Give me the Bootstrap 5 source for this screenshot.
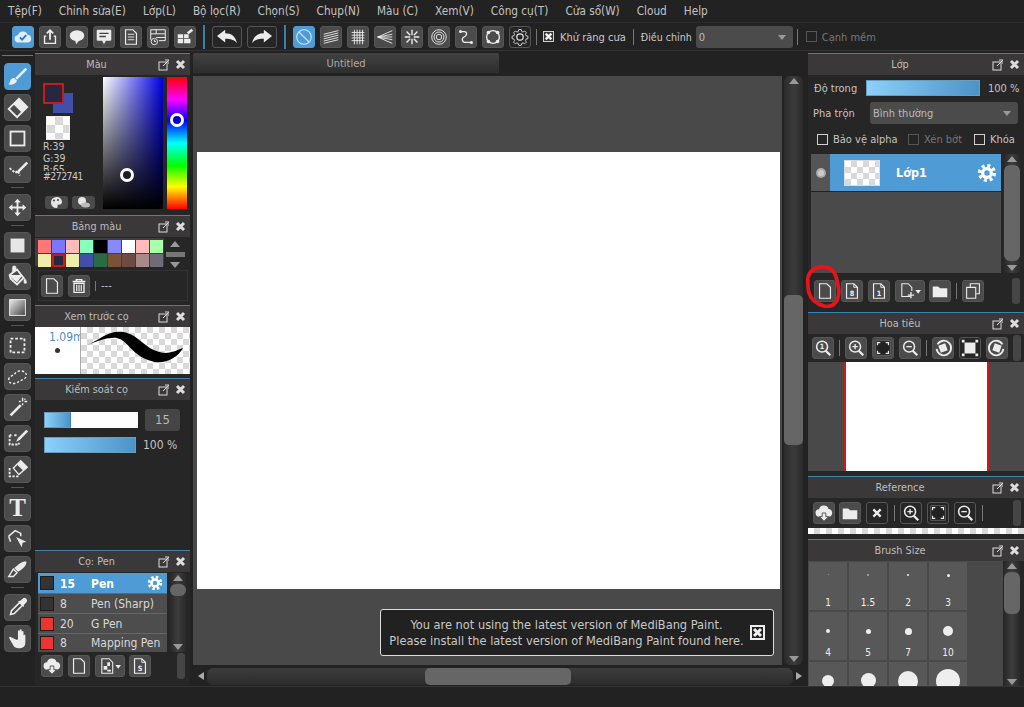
<!DOCTYPE html>
<html lang="vi">
<head>
<meta charset="utf-8">
<title>MediBang Paint</title>
<link href="https://cdn.jsdelivr.net/npm/bootstrap@5.3.0/dist/css/bootstrap.min.css" rel="stylesheet">
<style>
html,body{height:707px;overflow:hidden}
body{background:#222;color:#c4c4c4;font-family:"DejaVu Sans Condensed","DejaVu Sans",sans-serif;font-stretch:condensed;font-size:11px;line-height:1.2;width:1024px}
svg{display:block}
.nudge{padding-top:2px}
.app-menu{height:23px;padding-left:8px;gap:17px;font-size:11.7px;color:#c2c2c2;border-bottom:1px solid #2c2c2c;white-space:nowrap}
.app-bar{height:28px;padding-left:12px;border-bottom:1px solid #333;color:#c8c8c8;white-space:nowrap}
.ib{width:22px;height:22px;flex:none;padding:0;background:#4b4b4b;border:1px solid #565656;border-radius:3px;color:#ececec}
.ib.dk{background:#262626;border-color:#555}
.ib.on{background:#4f9bd6;border-color:#4f9bd6}
.ib.wide{width:30px}
.ib.tl{width:27px;height:27px;border-radius:4px}
.ib.tee{font-family:"Liberation Serif",serif;font-size:25px;line-height:1;font-weight:700}
.ib.tuck{margin-left:-1px}
.btn-row{gap:5px}
.vs{width:1px;height:16px;background:#777;flex:none}
.vs.bl{width:2px;height:24px;background:#3f7ea8;margin:0 7px}
.vs.short{height:10px}
.vs.m5{margin-left:5px}
.vs.m6{margin-left:7px}
.ck{width:11px;height:11px;border:1px solid #d0d0d0;flex:none;display:inline-block}
.ck.x{background:#333;color:#eee;margin-left:6px}
.ck.off{border-color:#555}
.ck-l{margin-left:6px}
.ck-l2{margin-left:5px}
.adj-l{margin-left:7px;font-size:10.6px}
.dim{color:#777}
.drop{background:#4b4b4b;border-radius:3px;color:#bbb;position:relative;height:22px;line-height:24px;padding-left:3px}
.drop::after{content:"";position:absolute;right:7px;top:50%;margin-top:-2px;border:4px solid transparent;border-top:5px solid #999;border-bottom:0}
.drop-a{width:97px;margin-left:4px}
.drop-b{width:148px}
.work{height:635px;padding-top:2px}
.col-tools{width:35px;flex:none;padding:10px 0 0 4px;gap:4px;position:relative}
.col-tools::before{content:"";position:absolute;left:2px;right:2px;top:2px;height:1px;background:#3f83ad}
.tsep{width:13px;height:3px;margin-left:7px;border-top:1px solid #555;flex:none;padding-top:1px}
.col-left{width:155px;flex:none}
.col-mid{width:613px;flex:none;margin-left:3px;position:relative}
.col-right{width:216px;flex:none;margin-left:2px}
.pn{border-top:1px solid #3f83ad;background:#262626;flex:none;overflow:hidden}
.pn-h{height:21px;background:#3a3838;color:#bdbdbd;font-size:10.8px}
.pn-t{flex-grow:1;text-align:center;padding-top:2px}
.pn-ic{width:32px;flex:none;gap:6px;color:#ddd}
.h-a{height:162px}.h-b{height:90px}.h-c{height:73px}.h-d{height:172px}.h-e{height:135px}
.h-f{height:259px}.h-g{height:164px}.h-i{height:63px}.h-j{height:147px}
.cl-swatches{width:68px;padding:8px 0 0 8px;position:relative;flex:none}
.sw-fg{width:21px;height:21px;background:#272741;border:2px solid #c81a1a;position:relative;z-index:1}
.sw-bg{width:20px;height:20px;background:#4050a8;margin:-11px 0 0 10px}
.chk{background:repeating-conic-gradient(#d9d9d9 0 25%,#fff 0 50%) 0 0/12px 12px}
.sw-tr{width:24px;height:24px;margin:3px 0 0 3px;border:1px solid #eee;background-size:16px 16px}
.cl-txt{font-size:10.5px;line-height:11.5px;margin-top:1px;color:#c8c8c8}
.cl-b{height:7px;overflow:hidden}
.cl-hex{letter-spacing:-.6px}
.cl-sq{width:60px;height:132px;margin:2px 0 0 0;background:linear-gradient(#0000 0,#000 100%),linear-gradient(90deg,#fff,#0000e8);position:relative;flex:none}
.cl-hue{width:20px;height:132px;margin:2px 0 0 4px;background:linear-gradient(#f00,#f0f 17%,#00f 33%,#0ff 50%,#0f0 67%,#ff0 83%,#f00);position:relative;flex:none}
.ring{position:absolute;width:14px;height:14px;border:3px solid #fff;border-radius:50%;transform:translate(-7px,-7px)}
.ring.hue{background:#0000d0;left:10px;top:43px}
.ring.sq{background:#1c1c2e;left:24px;top:98px}
.mini{width:23px;height:13px;background:#4b4b4b;border-radius:3px;flex:none;color:#e6e6e6}
.mini-row{margin:13px 0 0 2px;gap:4px}
.pal-wrap{padding-top:1px}
.pal{width:129px;padding:2px 0 0 3px;background:#3f3f3f;display:grid;grid-template-columns:repeat(9,13px);gap:1px;height:28px;flex:none}
.pal i{display:block;width:13px;height:13px}
.pal i.sel{outline:2px solid #c81a1a;outline-offset:-2px;background:#272741!important}
.pal-ctl{width:20px;margin-left:1px;padding-top:3px}
.ar-u,.ar-d{width:0;height:0;border:5px solid transparent;border-bottom:6px solid #999;border-top:0;flex:none}
.ar-d{border-top:6px solid #999;border-bottom:0;margin-top:auto;margin-bottom:2px}
.pal-ctl .ar-d{margin-top:0}
.pal-s{width:19px;height:5px;background:#777;margin:5px 0}
.box-bd{border:1px solid #333;height:31px;margin:0 2px 0 3px;padding:0 0 0 2px;gap:5px}
.pv-w{width:46px;height:47px;background:#fff;color:#4f8fc4;position:relative;overflow:hidden;border-right:1px solid #aaa;flex:none;font-size:12px;white-space:nowrap;padding:3px 0 0 14px}
.pv-d{width:5px;height:5px;background:#333;border-radius:50%;position:absolute;left:20px;top:21px}
.pv-c{height:47px}
.bar-b{background:linear-gradient(90deg,#8cd0fb,#4b94c8);border:1px solid #6a9cbe;height:16px}
.bar-92{width:92px}.bar-114{width:114px}
.sl-a{width:94px;height:16px;background:#fff;flex:none}
.sl-a .bar-b{width:27px;height:100%;border-right:1px solid #3f83ad}
.num{width:35px;height:22px;background:#454545;border-radius:3px;font-size:13px;color:#b8b8b8;flex:none;margin-left:7px}
.pct{font-size:12px;margin-left:7px}
.row-a{padding:9px 0 0 9px}
.row-b{padding:6px 0 0 9px}
.lst-wrap{padding:1px 0 0 3px}
.brl{width:129px;flex:none;background:#4d4d4d}
.brl-r{height:20px;border-bottom:1px solid #666;color:#d8d8d8;font-size:12px;padding-left:2px;white-space:nowrap;overflow:hidden}
.brl-r.on{background:#4f9bd6;color:#fff;font-weight:700;height:21px}
.brl-r.cut{height:17px;border:0}
.brl-s{width:14px;height:14px;background:#333;border:1px solid #1c1c1c;flex:none;margin-right:6px}
.brl-s.rd{background:#ee3333}
.brl-n{width:31px;flex:none}
.vbar{width:18px;flex:none;background:linear-gradient(90deg,#262626,#3d3d3d,#262626);border-radius:5px}
.vb-79{height:79px;margin-left:2px}.vb-119{height:119px;margin-left:2px}.vb-126{height:126px}
.vb-top{margin:2px 0 3px}
.vthumb{background:#666;border-radius:6px;margin:0 1px;width:16px}
.vt-12{height:12px}.vt-96{height:96px}.vt-42{height:42px}
.g-bar{width:8px;height:26px;background:#454545;border-radius:3px;flex:none;margin-left:auto;margin-right:4px}
.g-bar.m5{margin-right:5px}.g-bar.m3{margin-right:3px}
.foot-a{padding:2px 0 0 6px;gap:5px;height:25px}
.foot-b{padding:5px 0 0 6px;gap:5px}
.tab{width:306px;height:20px;background:linear-gradient(#414141,#2e2e2e);border-radius:2px 2px 0 0;color:#aaa;font-size:11px;margin:0 0 3px}
.stage{height:589px}
.cv-a{width:589px;background:#4a4949;padding:76px 2px 76px 4px;flex:none}
.cv{background:#fff;height:437px}
.sc-v{width:19px;margin-left:2px;background:linear-gradient(90deg,#2b2b2b,#3b3b3b,#2b2b2b);border-radius:6px}
.sc-v .ar-u{margin-top:2px}
.sc-v .ar-d{margin-bottom:3px}
.sc-thumb{height:150px;width:19px;background:#666;border-radius:5px;margin:211px 0 0}
.sc-h{height:20px;padding:2px 2px 0 5px}
.sc-tr{width:586px;height:17px;margin:0 3px;background:linear-gradient(#3d3d3d,#2b2b2b);border-radius:6px;padding-left:218px;flex:none}
.sc-ht{width:146px;height:17px;background:#666;border-radius:5px}
.tri-l,.tri-r{width:0;height:0;border:4px solid transparent;border-right:6px solid #aaa;border-left:0;flex:none}
.tri-r{border-left:6px solid #aaa;border-right:0}
.toast-x{position:absolute;left:187px;top:556px;width:394px;height:47px;background:#212121;border:1px solid #ddd;border-radius:3px;font-size:12.7px;line-height:16px;color:#c8c8c8;padding-left:2px;white-space:nowrap}
.toast-c{width:15px;height:15px;border:2px solid #eee;color:#eee;flex:none;margin:0 8px 0 0}
.red-ring{position:absolute;left:805px;top:265px;width:37px;height:43px;pointer-events:none}
.r1{padding:5px 0 0 6px}.r2{padding:6px 0 0 5px}
.lb-52{width:52px}.lb-57{width:57px}
.r3{padding:4px 0 0 9px;height:26px;margin-bottom:4px}
.lb-75{width:75px;margin-left:5px}.lb-50{width:50px;margin-left:5px}
.r3-l{margin-left:5px}
.lay-wrap{padding:0 0 0 3px}
.lay-row{height:38px;border-bottom:1px solid #222;background:#4f9bd6}
.lay-e{width:19px;height:100%;background:#555;flex:none}
.dot-e{width:10px;height:10px;background:#ccc;border-radius:50%;border:2px solid #aaa}
.lay-th{width:36px;height:26px;border:1px solid #ddd;margin-left:14px;flex:none}
.lay-l{width:190px;height:119px;background:#4a4a4a;flex:none}
.lay-n{color:#fff;font-weight:700;font-size:12.5px;margin-left:16px}
.gear-w{color:#fff}
.tb-nav{height:28px;padding:0 0 0 4px;gap:5px}
.tb-ref{height:30px;padding:0 0 0 5px;gap:4px}
.tb-ref .vs{margin:0 1px 0 2px}
.tb-ref .plus1{margin-left:1px}
.nv-a{height:109px;background:#4a4949}
.nv-w{width:145px;height:100%;background:#fff;border-left:2px solid #c81a1a;border-right:2px solid #c81a1a;margin-left:36px}
.strip{height:6px}
.br-cell{width:38px;height:48px;background:#585858;color:#eee;font-size:10px;flex:none;padding-bottom:1px}
.br-g{width:167px;display:grid;grid-template-columns:repeat(4,38px);gap:2px;padding:1px 0 0 1px}
.br-d{background:#eee;border-radius:50%;margin-top:12px}
.br-w{height:126px;background:#4a4949;overflow:hidden;flex:none;width:195px}
.status{height:21px;background:#222;border-top:1px solid #333}
.ptxt{font-size:8px;font-weight:700;fill:currentColor;font-family:"DejaVu Sans",sans-serif}
</style>
</head>
<body>
<svg width="0" height="0" class="position-absolute">
<defs>
<g id="s-pop"><rect x="1" y="3" width="8" height="8" fill="none" stroke="currentColor"/><path d="M5 7 10.500 1.500M7 1h4v4" fill="none" stroke="currentColor"/></g>
<g id="s-close"><path d="M2 2 9 9M9 2 2 9" fill="none" stroke="currentColor" stroke-width="3"/></g>
<symbol id="i-cloud" viewBox="0 0 22 22"><path d="M6 17a4 4 0 0 1-.5-8 5.500 5.500 0 0 1 10.500-.5 4.300 4.300 0 0 1 .5 8.500z" fill="#dfeefa"/><path d="M7.500 11.500l2.500 2.500 4.500-5" fill="none" stroke="#2f74c0" stroke-width="2"/></symbol>
<symbol id="i-share" viewBox="0 0 22 22"><path d="M7 10H5v8h12v-8h-2" fill="none" stroke="currentColor" stroke-width="1.500"/><path d="M11 14V4M7.500 7 11 3.500 14.500 7" fill="none" stroke="currentColor" stroke-width="2"/></symbol>
<symbol id="i-oval" viewBox="0 0 22 22"><ellipse cx="11" cy="9.500" rx="8" ry="6" fill="currentColor"/><path d="M9 14l1 5 4-5z" fill="currentColor"/></symbol>
<symbol id="i-cmt" viewBox="0 0 22 22"><path d="M4 3h14a1 1 0 0 1 1 1v10a1 1 0 0 1-1 1h-5l-2 4-2-4H4a1 1 0 0 1-1-1V4a1 1 0 0 1 1-1z" fill="currentColor"/><path d="M6 7h10M6 10.500h7" stroke="#444" stroke-width="1.500"/></symbol>
<symbol id="i-doc" viewBox="0 0 22 22"><path d="M5 3h8l4 4v12H5z" fill="none" stroke="currentColor" stroke-width="1.300"/><path d="M7.500 8h7M7.500 11h7M7.500 14h7" stroke="currentColor"/></symbol>
<symbol id="i-tbl" viewBox="0 0 22 22"><path d="M3 3h16v12h-7M3 3v11M3 7.500h16M9 3v4.500M9 11.500h10" fill="none" stroke="currentColor" stroke-width="1.100"/><circle cx="7" cy="16" r="3.500" fill="none" stroke="currentColor"/><path d="M7 14v2h2" fill="none" stroke="currentColor"/></symbol>
<symbol id="i-gred" viewBox="0 0 22 22"><path d="M3 8h6v4H3zM10 8h5v4h-5zM3 13h6v5H3zM10 13h7v5h-7z" fill="currentColor"/><path d="M13 6 18 2l2 2-5 4z" fill="currentColor"/></symbol>
<symbol id="i-undo" viewBox="0 0 30 22"><path d="M4 10 13 3v4c7 0 11 3 13 11-3-4-7-5-13-5v4z" fill="currentColor"/></symbol>
<symbol id="i-redo" viewBox="0 0 30 22"><path d="M26 10 17 3v4c-7 0-11 3-13 11 3-4 7-5 13-5v4z" fill="currentColor"/></symbol>
<symbol id="i-none" viewBox="0 0 22 22"><circle cx="11" cy="11" r="8" fill="none" stroke="#cfe6f7" stroke-width="1.200"/><path d="M5.500 5.500 16.500 16.500" stroke="#cfe6f7" stroke-width="1.200"/></symbol>
<symbol id="i-par" viewBox="0 0 22 22"><path d="M3 8 19 4M3 10.500 19 6.500M3 13 19 9M3 15.500 19 11.500M3 18 19 14" stroke="currentColor"/></symbol>
<symbol id="i-grid" viewBox="0 0 22 22"><path d="M4 6h14M4 9h14M4 12h14M4 15h14M7 3v16M10 3v16M13 3v16M16 3v16" stroke="currentColor"/></symbol>
<symbol id="i-conv" viewBox="0 0 22 22"><path d="M3 11 19 4M3 11 19 8M3 11h16M3 11 19 14M3 11 19 18" stroke="currentColor"/></symbol>
<symbol id="i-burst" viewBox="0 0 22 22"><path d="M11 3v6M11 13v6M3 11h6M13 11h6M5 5l4 4M13 13l4 4M17 5l-4 4M9 13l-4 4" stroke="currentColor" stroke-width="1.500"/></symbol>
<symbol id="i-conc" viewBox="0 0 22 22"><g fill="none" stroke="currentColor"><circle cx="11" cy="11" r="8"/><circle cx="11" cy="11" r="5.500"/><circle cx="11" cy="11" r="3"/></g></symbol>
<symbol id="i-curve" viewBox="0 0 22 22"><path d="M5 5h4c4 0 3 5 0 6s-3 6 2 6h6" fill="none" stroke="currentColor" stroke-width="1.400"/><circle cx="5" cy="5" r="1.700" fill="currentColor"/><circle cx="17" cy="17" r="1.700" fill="currentColor"/></symbol>
<symbol id="i-ring" viewBox="0 0 22 22"><circle cx="11" cy="11" r="7" fill="none" stroke="currentColor" stroke-width="1.500"/><g fill="currentColor"><circle cx="6" cy="6" r="2"/><circle cx="16" cy="6" r="2"/><circle cx="6" cy="16" r="2"/><circle cx="16" cy="16" r="2"/></g></symbol>
<symbol id="i-gearo" viewBox="0 0 22 22"><circle cx="11" cy="11" r="3.500" fill="none" stroke="currentColor" stroke-width="1.300"/><path d="M9.500 2.500h3l.5 2.300 1.800.8 2-1.200 2 2-1.200 2 .8 1.800 2.300.5v3l-2.300.5-.8 1.800 1.200 2-2 2-2-1.200-1.800.8-.5 2.300h-3l-.5-2.300-1.800-.8-2 1.200-2-2 1.200-2-.8-1.800-2.300-.5v-3l2.300-.5.8-1.800-1.200-2 2-2 2 1.200 1.800-.8z" fill="none" stroke="currentColor" transform="translate(1.100 .5) scale(.9)"/></symbol>
<symbol id="i-gear" viewBox="0 0 22 22"><circle cx="11" cy="11" r="6.500" fill="currentColor"/><circle cx="11" cy="11" r="8" fill="none" stroke="currentColor" stroke-width="4" stroke-dasharray="3.300 3"/><circle cx="11" cy="11" r="3" fill="#4f9bd6"/></symbol>
<symbol id="i-page" viewBox="0 0 22 22"><path d="M5 3h8l4 4v12H5z" fill="none" stroke="currentColor" stroke-width="1.300"/><path d="M13 3v4h4" fill="none" stroke="currentColor"/></symbol>
<symbol id="i-trash" viewBox="0 0 22 22"><path d="M4 6h14M8 6V4h6v2" fill="none" stroke="currentColor" stroke-width="1.500"/><path d="M5.500 8h11v10h-11z" fill="none" stroke="currentColor" stroke-width="1.500"/><path d="M8.500 9.500v7M11 9.500v7M13.500 9.500v7" stroke="currentColor" stroke-width="1.300"/></symbol>
<symbol id="i-cdl" viewBox="0 0 22 22"><path d="M6 15a4 4 0 0 1-.5-8 5.500 5.500 0 0 1 10.500-.5 4.300 4.300 0 0 1 .5 8.500z" fill="currentColor"/><path d="M9 11h4v4h3l-5 5-5-5h3z" fill="currentColor" stroke="#4b4b4b"/></symbol>
<symbol id="i-pgc" viewBox="0 0 30 22"><path d="M6 3h8l4 4v12H6z" fill="none" stroke="currentColor" stroke-width="1.200"/><path d="M8 11h4v4H8zM12 7h3v4h-3zM12 15h4v2h-4z" fill="currentColor"/><path d="M21 10h6l-3 4z" fill="currentColor"/></symbol>
<symbol id="i-pgs" viewBox="0 0 22 22"><path d="M5 3h8l4 4v12H5z" fill="none" stroke="currentColor" stroke-width="1.300"/></symbol>
<symbol id="i-pgadd" viewBox="0 0 30 22"><path d="M15 17H6V3h7l4 4v4" fill="none" stroke="currentColor" stroke-width="1.200"/><path d="M16 12v7M12.500 15.500h7" stroke="currentColor" stroke-width="1.500"/><path d="M21 10h6l-3 4z" fill="currentColor"/></symbol>
<symbol id="i-fold" viewBox="0 0 22 22"><path d="M3 6h6l2 2h8v10H3z" fill="currentColor"/></symbol>
<symbol id="i-copy" viewBox="0 0 22 22"><path d="M8 7V3h10v11h-4M4 7h10v12H4z" fill="none" stroke="currentColor" stroke-width="1.200"/></symbol>
<symbol id="i-zoom" viewBox="0 0 22 22"><circle cx="10" cy="9.500" r="6" fill="none" stroke="currentColor" stroke-width="1.700"/><path d="M14 14l5 5" stroke="currentColor" stroke-width="2.500"/></symbol>
<symbol id="i-zp" viewBox="0 0 22 22"><use href="#i-zoom"/><path d="M7 9.500h6M10 6.500v6" stroke="currentColor" stroke-width="1.500"/></symbol>
<symbol id="i-zm" viewBox="0 0 22 22"><use href="#i-zoom"/><path d="M7 9.500h6" stroke="currentColor" stroke-width="1.500"/></symbol>
<symbol id="i-fit" viewBox="0 0 22 22"><path d="M3 3h16v16H3z" fill="#222" stroke="#666"/><path d="M5 8V5h3M14 5h3v3M17 14v3h-3M8 17H5v-3" fill="none" stroke="currentColor" stroke-width="1.300"/></symbol>
<symbol id="i-rotl" viewBox="0 0 22 22"><path d="M5 7a8 8 0 1 1-1 5" fill="none" stroke="currentColor" stroke-width="2"/><rect x="7" y="7" width="8" height="8" fill="currentColor" transform="rotate(-20 11 11)"/></symbol>
<symbol id="i-rotr" viewBox="0 0 22 22"><path d="M17 7a8 8 0 1 0 1 5" fill="none" stroke="currentColor" stroke-width="2"/><rect x="7" y="7" width="8" height="8" fill="currentColor" transform="rotate(20 11 11)"/></symbol>
<symbol id="i-frame" viewBox="0 0 22 22"><rect x="5" y="5" width="12" height="12" fill="currentColor"/><path d="M2 2h3v3H2zM17 2h3v3h-3zM2 17h3v3H2zM17 17h3v3h-3z" fill="currentColor"/></symbol>
<symbol id="i-x" viewBox="0 0 22 22"><path d="M7 7l8 8M15 7l-8 8" stroke="currentColor" stroke-width="2.500"/></symbol>
<symbol id="i-pal" viewBox="0 0 23 13"><path d="M11.500 1a5.500 5.500 0 1 0 0 11c1.500 0 1-1.500 1-2.500s1-1 2-1 2.500-.5 2.500-2.500C17 3 14.500 1 11.500 1z" fill="currentColor"/><circle cx="9" cy="4.500" r="1" fill="#444"/><circle cx="13" cy="4" r="1" fill="#444"/></symbol>
<symbol id="i-sw" viewBox="0 0 23 13"><circle cx="10" cy="5" r="4" fill="currentColor"/><ellipse cx="13.500" cy="9" rx="4.500" ry="2.500" fill="#bbb"/></symbol>
<symbol id="i-brush" viewBox="0 0 27 27"><path d="M22 4 11 15l2 2L24 6z" fill="currentColor"/><path d="M10 15c-4 0-4 3-5 5-.3 1-1 2-1.500 2 3 1 8 0 9.500-4z" fill="currentColor"/></symbol>
<symbol id="i-erase" viewBox="0 0 27 27"><path d="M15 4 24 13 13 24 4 15z" fill="none" stroke="currentColor" stroke-width="2"/><path d="M15 4 24 13 18 19 9 10z" fill="currentColor"/></symbol>
<symbol id="i-rect" viewBox="0 0 27 27"><rect x="6" y="6" width="15" height="15" fill="none" stroke="currentColor" stroke-width="2"/></symbol>
<symbol id="i-poly" viewBox="0 0 27 27"><path d="M5 12l6 5 3-2 2 5" fill="none" stroke="currentColor" stroke-width="2" stroke-dasharray="2.500 1.500"/><path d="M23 5 14 14l-2 4 4-2 9-9z" fill="currentColor"/></symbol>
<symbol id="i-move" viewBox="0 0 27 27"><path d="M13.500 4 17 8h-2.500v4.500H19V10l4 3.500-4 3.500v-2.500h-4.500V19H17l-3.500 4L10 19h2.500v-4.500H8V17l-4-3.500L8 10v2.500h4.500V8H10z" fill="currentColor"/></symbol>
<symbol id="i-sq" viewBox="0 0 27 27"><rect x="6" y="6" width="15" height="15" fill="#e6e6e6"/></symbol>
<symbol id="i-buck" viewBox="0 0 27 27"><path d="M5 12 13 6l7 9-7 7-7-6z" fill="none" stroke="currentColor" stroke-width="2"/><path d="M5 12h14l-6 8-6-5z" fill="currentColor"/><path d="M8 9V4a2 2 0 0 1 4 0v3M21 15c3 4 3 6 1 6s-2-2-1-6z" fill="currentColor" stroke="currentColor" stroke-width=".5"/></symbol>
<symbol id="i-grad" viewBox="0 0 27 27"><defs><linearGradient id="gd" x1="0" y1="0" x2="1" y2="1"><stop offset="0" stop-color="#eee"/><stop offset="1" stop-color="#444"/></linearGradient></defs><rect x="5" y="5" width="17" height="17" fill="url(#gd)" stroke="#eee"/></symbol>
<symbol id="i-drect" viewBox="0 0 27 27"><rect x="6" y="6" width="15" height="15" fill="none" stroke="currentColor" stroke-width="2" stroke-dasharray="3 2"/></symbol>
<symbol id="i-lasso" viewBox="0 0 27 27"><path d="M4 17c0-4 5-4 7-7 3-4 12-3 12 2 0 5-6 5-8 7-3 3-11 3-11-2z" fill="none" stroke="currentColor" stroke-width="1.500" stroke-dasharray="2.500 2"/></symbol>
<symbol id="i-wand" viewBox="0 0 27 27"><path d="M5 21 16 10l2 2L7 23z" fill="currentColor"/><path d="M19 3v4M15 7h2M21 7h3M19 9v2M22 4l-1 1" stroke="currentColor" stroke-width="1.500"/></symbol>
<symbol id="i-dpen" viewBox="0 0 27 27"><path d="M5 10h2M10 10h3M5 10v10h10v-2" fill="none" stroke="currentColor" stroke-width="2" stroke-dasharray="2.500 1.500"/><path d="M23 4 14 13l-2 4 4-2 9-9z" fill="currentColor"/></symbol>
<symbol id="i-der" viewBox="0 0 27 27"><path d="M5 12v9h10" fill="none" stroke="currentColor" stroke-width="2" stroke-dasharray="2.500 1.500"/><path d="M17 4l7 7-9 8-6-7z" fill="none" stroke="currentColor" stroke-width="1.500"/><path d="M17 4l7 7-4 4-7-7z" fill="currentColor"/></symbol>
<symbol id="i-opa" viewBox="0 0 27 27"><path d="M4 11 11 5l6 3v3M6 17l-2-6" fill="none" stroke="currentColor" stroke-width="1.600"/><path d="M12 12l11 5-4 1-1 5z" fill="currentColor"/></symbol>
<symbol id="i-blade" viewBox="0 0 27 27"><path d="M23 5c1 2-2 7-9 11l-4-4c5-5 10-8 13-7z" fill="currentColor"/><path d="M9 13l4 4-4 4H4z" fill="none" stroke="currentColor" stroke-width="1.500"/></symbol>
<symbol id="i-drop" viewBox="0 0 27 27"><path d="M16 8l3 3-9 9-4 1 1-4z" fill="none" stroke="currentColor" stroke-width="1.700"/><path d="M14 7l6 6 1-3 2-2a2.500 2.500 0 0 0-4-4l-2 2z" fill="currentColor"/></symbol>
<symbol id="i-hand" viewBox="0 0 27 27"><path d="M6 12c-1-1-2 0-1 2l4 7c1 2 3 3 6 3 4 0 7-2 7-6v-7c0-2-2-2-2 0v3V7c0-2-2-2-2 0v4-6c0-2-2-2-2 0v6V6c0-2-2-2-2 0v8l-1 1z" fill="currentColor"/></symbol>
</defs>
</svg>

<nav class="app-menu d-flex align-items-center">
<span>Tệp(F)</span><span>Chỉnh sửa(E)</span><span>Lớp(L)</span><span>Bộ lọc(R)</span><span>Chọn(S)</span><span>Chụp(N)</span><span>Màu (C)</span><span>Xem(V)</span><span>Công cụ(T)</span><span>Cửa sổ(W)</span><span>Cloud</span><span>Help</span>
</nav>

<div class="app-bar d-flex align-items-center">
<div class="d-flex btn-row">
<div class="ib on"><svg width="20" height="20"><use href="#i-cloud"/></svg></div>
<div class="ib"><svg width="20" height="20"><use href="#i-share"/></svg></div>
<div class="ib"><svg width="20" height="20"><use href="#i-oval"/></svg></div>
<div class="ib"><svg width="20" height="20"><use href="#i-cmt"/></svg></div>
<div class="ib"><svg width="20" height="20"><use href="#i-doc"/></svg></div>
<div class="ib"><svg width="20" height="20"><use href="#i-tbl"/></svg></div>
<div class="ib"><svg width="20" height="20"><use href="#i-gred"/></svg></div>
</div>
<div class="vs bl"></div>
<div class="d-flex btn-row">
<div class="ib dk wide"><svg width="28" height="20"><use href="#i-undo"/></svg></div>
<div class="ib dk wide"><svg width="28" height="20"><use href="#i-redo"/></svg></div>
</div>
<div class="vs bl"></div>
<div class="d-flex btn-row">
<div class="ib on"><svg width="20" height="20"><use href="#i-none"/></svg></div>
<div class="ib"><svg width="20" height="20"><use href="#i-par"/></svg></div>
<div class="ib"><svg width="20" height="20"><use href="#i-grid"/></svg></div>
<div class="ib"><svg width="20" height="20"><use href="#i-conv"/></svg></div>
<div class="ib"><svg width="20" height="20"><use href="#i-burst"/></svg></div>
<div class="ib"><svg width="20" height="20"><use href="#i-conc"/></svg></div>
<div class="ib"><svg width="20" height="20"><use href="#i-curve"/></svg></div>
<div class="ib"><svg width="20" height="20"><use href="#i-ring"/></svg></div>
<div class="ib dk"><svg width="20" height="20"><use href="#i-gearo"/></svg></div>
</div>
<div class="vs m5"></div>
<span class="ck x"><svg width="9" height="9" viewBox="0 0 11 11"><use href="#s-close"/></svg></span>
<span class="ck-l nudge">Khử răng cưa</span>
<div class="vs m6"></div>
<span class="adj-l nudge">Điều chỉnh</span>
<div class="drop drop-a">0</div>
<div class="vs ms-1"></div>
<span class="ck off ms-2"></span>
<span class="ck-l2 dim nudge">Cạnh mềm</span>
</div>

<div class="work d-flex">
<aside class="col-tools d-flex flex-column">
<div class="ib tl on"><svg width="25" height="25"><use href="#i-brush"/></svg></div>
<div class="ib tl"><svg width="25" height="25"><use href="#i-erase"/></svg></div>
<div class="ib tl"><svg width="25" height="25"><use href="#i-rect"/></svg></div>
<div class="ib tl"><svg width="25" height="25"><use href="#i-poly"/></svg></div>
<div class="tsep"></div>
<div class="ib tl"><svg width="25" height="25"><use href="#i-move"/></svg></div>
<div class="tsep"></div>
<div class="ib tl"><svg width="25" height="25"><use href="#i-sq"/></svg></div>
<div class="ib tl"><svg width="25" height="25"><use href="#i-buck"/></svg></div>
<div class="ib tl"><svg width="25" height="25"><use href="#i-grad"/></svg></div>
<div class="tsep"></div>
<div class="ib tl"><svg width="25" height="25"><use href="#i-drect"/></svg></div>
<div class="ib tl"><svg width="25" height="25"><use href="#i-lasso"/></svg></div>
<div class="ib tl"><svg width="25" height="25"><use href="#i-wand"/></svg></div>
<div class="ib tl"><svg width="25" height="25"><use href="#i-dpen"/></svg></div>
<div class="ib tl"><svg width="25" height="25"><use href="#i-der"/></svg></div>
<div class="tsep"></div>
<div class="ib tl tee d-flex align-items-center justify-content-center">T</div>
<div class="ib tl"><svg width="25" height="25"><use href="#i-opa"/></svg></div>
<div class="ib tl"><svg width="25" height="25"><use href="#i-blade"/></svg></div>
<div class="tsep"></div>
<div class="ib tl"><svg width="25" height="25"><use href="#i-drop"/></svg></div>
<div class="ib tl"><svg width="25" height="25"><use href="#i-hand"/></svg></div>
</aside>

<div class="col-left">
<section class="pn h-a">
<header class="pn-h d-flex align-items-center"><span class="pn-t">Màu</span><span class="pn-ic d-flex"><svg width="11" height="12"><use href="#s-pop"/></svg><svg width="11" height="11"><use href="#s-close"/></svg></span></header>
<div class="d-flex">
<div class="cl-swatches">
<div class="sw-fg"></div><div class="sw-bg"></div>
<div class="sw-tr chk"></div>
<div class="cl-txt">R:39<br>G:39<div class="cl-b">B:65</div><span class="cl-hex">#272741</span></div>
<div class="d-flex mini-row"><div class="mini"><svg width="23" height="13"><use href="#i-pal"/></svg></div><div class="mini"><svg width="23" height="13"><use href="#i-sw"/></svg></div></div>
</div>
<div class="cl-sq"><div class="ring sq"></div></div>
<div class="cl-hue"><div class="ring hue"></div></div>
</div>
</section>
<section class="pn h-b">
<header class="pn-h d-flex align-items-center"><span class="pn-t">Bảng màu</span><span class="pn-ic d-flex"><svg width="11" height="12"><use href="#s-pop"/></svg><svg width="11" height="11"><use href="#s-close"/></svg></span></header>
<div class="d-flex pal-wrap">
<div class="pal">
<i style="background:#f77"></i><i style="background:#77f"></i><i style="background:#fbb"></i><i style="background:#8fb"></i><i style="background:#000"></i><i style="background:#88f"></i><i style="background:#fff"></i><i style="background:#fbb"></i><i style="background:#afa"></i>
<i style="background:#eea"></i><i class="sel"></i><i style="background:#eea"></i><i style="background:#4050a8"></i><i style="background:#2b6a44"></i><i style="background:#7a5236"></i><i style="background:#6e4b42"></i><i style="background:#a98a88"></i><i style="background:#706b78"></i>
</div>
<div class="pal-ctl d-flex flex-column align-items-center"><div class="ar-u"></div><div class="pal-s"></div><div class="ar-d"></div></div>
</div>
<div class="box-bd d-flex align-items-center">
<div class="ib"><svg width="20" height="20"><use href="#i-pgs"/></svg></div>
<div class="ib"><svg width="20" height="20"><use href="#i-trash"/></svg></div>
<div class="vs short"></div><span>---</span>
</div>
</section>
<section class="pn h-c">
<header class="pn-h d-flex align-items-center"><span class="pn-t">Xem trước cọ</span><span class="pn-ic d-flex"><svg width="11" height="12"><use href="#s-pop"/></svg><svg width="11" height="11"><use href="#s-close"/></svg></span></header>
<div class="d-flex">
<div class="pv-w">1.09mm<div class="pv-d"></div></div>
<div class="chk pv-c flex-grow-1"><svg width="108" height="47"><path d="M6 18C20 12 28 3 42 5 58 7 64 24 84 26 92 26 98 22 102 21 96 32 82 38 70 34 50 28 48 14 36 11 26 10 18 14 6 18z" fill="#000"/></svg></div>
</div>
</section>
<section class="pn h-d">
<header class="pn-h d-flex align-items-center"><span class="pn-t">Kiểm soát cọ</span><span class="pn-ic d-flex"><svg width="11" height="12"><use href="#s-pop"/></svg><svg width="11" height="11"><use href="#s-close"/></svg></span></header>
<div class="d-flex align-items-center row-a">
<div class="sl-a"><div class="bar-b"></div></div>
<div class="num d-flex align-items-center justify-content-center">15</div>
</div>
<div class="d-flex align-items-center row-b">
<div class="bar-b bar-92"></div>
<span class="pct">100 %</span>
</div>
</section>
<section class="pn h-e">
<header class="pn-h d-flex align-items-center"><span class="pn-t">Cọ: Pen</span><span class="pn-ic d-flex"><svg width="11" height="12"><use href="#s-pop"/></svg><svg width="11" height="11"><use href="#s-close"/></svg></span></header>
<div class="d-flex lst-wrap">
<div class="brl">
<div class="brl-r on d-flex align-items-center"><span class="brl-s"></span><span class="brl-n nudge">15</span><span class="flex-grow-1 nudge">Pen</span><svg width="16" height="16" class="me-1 gear-w"><use href="#i-gear"/></svg></div>
<div class="brl-r d-flex align-items-center"><span class="brl-s"></span><span class="brl-n nudge">8</span><span class="nudge">Pen (Sharp)</span></div>
<div class="brl-r d-flex align-items-center"><span class="brl-s rd"></span><span class="brl-n nudge">20</span><span class="nudge">G Pen</span></div>
<div class="brl-r cut d-flex align-items-center"><span class="brl-s rd"></span><span class="brl-n nudge">8</span><span class="nudge">Mapping Pen</span></div>
</div>
<div class="vbar vb-79 d-flex flex-column align-items-center"><div class="ar-u vb-top"></div><div class="vthumb vt-12"></div><div class="ar-d"></div></div>
</div>
<div class="d-flex align-items-center foot-a">
<div class="ib"><svg width="20" height="20"><use href="#i-cdl"/></svg></div>
<div class="ib"><svg width="20" height="20"><use href="#i-pgs"/></svg></div>
<div class="ib wide"><svg width="28" height="20"><use href="#i-pgc"/></svg></div>
<div class="ib tuck"><svg width="20" height="20" viewBox="0 0 22 22"><use href="#i-page"/><text x="11" y="16" text-anchor="middle" class="ptxt">S</text></svg></div>
<div class="g-bar m5"></div>
</div>
</section>
</div>

<main class="col-mid">
<div class="tab d-flex align-items-center justify-content-center nudge">Untitled</div>
<div class="stage d-flex">
<div class="cv-a"><div class="cv"></div></div>
<div class="sc-v d-flex flex-column align-items-center"><div class="ar-u"></div><div class="sc-thumb"></div><div class="ar-d"></div></div>
</div>
<div class="sc-h d-flex align-items-center"><div class="tri-l"></div><div class="sc-tr"><div class="sc-ht"></div></div><div class="tri-r"></div></div>
<div class="toast-x d-flex align-items-center"><div class="flex-grow-1 text-center">You are not using the latest version of MediBang Paint.<br>Please install the latest version of MediBang Paint found here.</div><div class="toast-c"><svg width="11" height="11"><use href="#s-close"/></svg></div></div>
</main>

<div class="col-right">
<section class="pn h-f">
<header class="pn-h d-flex align-items-center"><span class="pn-t">Lớp</span><span class="pn-ic d-flex"><svg width="11" height="12"><use href="#s-pop"/></svg><svg width="11" height="11"><use href="#s-close"/></svg></span></header>
<div class="d-flex align-items-center r1"><span class="lb-52 nudge">Độ trong</span><div class="bar-b bar-114"></div><span class="ms-2 nudge">100 %</span></div>
<div class="d-flex align-items-center r2"><span class="lb-57 nudge">Pha trộn</span><div class="drop drop-b">Bình thường</div></div>
<div class="d-flex align-items-center r3"><span class="ck"></span><span class="lb-75 nudge">Bảo vệ alpha</span><span class="ck off"></span><span class="lb-50 dim nudge">Xén bớt</span><span class="ck"></span><span class="r3-l nudge">Khóa</span></div>
<div class="d-flex lay-wrap">
<div class="lay-l"><div class="lay-row d-flex align-items-center"><div class="lay-e d-flex align-items-center justify-content-center"><div class="dot-e"></div></div><div class="lay-th chk"></div><span class="lay-n">Lớp1</span><svg width="20" height="20" class="ms-auto me-1 gear-w"><use href="#i-gear"/></svg></div></div>
<div class="vbar vb-119 d-flex flex-column align-items-center"><div class="ar-u vb-top"></div><div class="vthumb vt-96"></div><div class="ar-d"></div></div>
</div>
<div class="d-flex align-items-center foot-b">
<div class="ib"><svg width="20" height="20"><use href="#i-pgs"/></svg></div>
<div class="ib"><svg width="20" height="20" viewBox="0 0 22 22"><use href="#i-page"/><text x="11" y="16" text-anchor="middle" class="ptxt">8</text></svg></div>
<div class="ib"><svg width="20" height="20" viewBox="0 0 22 22"><use href="#i-page"/><text x="11" y="16" text-anchor="middle" class="ptxt">1</text></svg></div>
<div class="ib wide"><svg width="28" height="20"><use href="#i-pgadd"/></svg></div>
<div class="ib tuck"><svg width="20" height="20"><use href="#i-fold"/></svg></div>
<div class="vs"></div>
<div class="ib"><svg width="20" height="20"><use href="#i-copy"/></svg></div>
<div class="g-bar"></div>
</div>
</section>
<section class="pn h-g">
<header class="pn-h d-flex align-items-center"><span class="pn-t">Hoa tiêu</span><span class="pn-ic d-flex"><svg width="11" height="12"><use href="#s-pop"/></svg><svg width="11" height="11"><use href="#s-close"/></svg></span></header>
<div class="d-flex align-items-center tb-nav">
<div class="ib"><svg width="20" height="20" viewBox="0 0 22 22"><use href="#i-zoom"/><text x="10" y="12.500" text-anchor="middle" class="ptxt">1</text></svg></div><div class="vs"></div>
<div class="ib"><svg width="20" height="20"><use href="#i-zp"/></svg></div>
<div class="ib"><svg width="20" height="20"><use href="#i-fit"/></svg></div>
<div class="ib"><svg width="20" height="20"><use href="#i-zm"/></svg></div><div class="vs"></div>
<div class="ib"><svg width="20" height="20"><use href="#i-rotl"/></svg></div>
<div class="ib dk"><svg width="20" height="20"><use href="#i-frame"/></svg></div>
<div class="ib"><svg width="20" height="20"><use href="#i-rotr"/></svg></div>
<div class="g-bar m3"></div>
</div>
<div class="nv-a"><div class="nv-w"></div></div>
</section>
<section class="pn h-i">
<header class="pn-h d-flex align-items-center"><span class="pn-t">Reference</span><span class="pn-ic d-flex"><svg width="11" height="12"><use href="#s-pop"/></svg><svg width="11" height="11"><use href="#s-close"/></svg></span></header>
<div class="d-flex align-items-center tb-ref">
<div class="ib"><svg width="20" height="20"><use href="#i-cdl"/></svg></div>
<div class="ib"><svg width="20" height="20"><use href="#i-fold"/></svg></div>
<div class="ib dk plus1"><svg width="20" height="20"><use href="#i-x"/></svg></div><div class="vs"></div>
<div class="ib dk"><svg width="20" height="20"><use href="#i-zp"/></svg></div>
<div class="ib dk plus1"><svg width="20" height="20"><use href="#i-fit"/></svg></div>
<div class="ib dk plus1"><svg width="20" height="20"><use href="#i-zm"/></svg></div><div class="vs"></div>
<div class="g-bar m3"></div>
</div>
<div class="chk strip"></div>
</section>
<section class="pn h-j">
<header class="pn-h d-flex align-items-center"><span class="pn-t">Brush Size</span><span class="pn-ic d-flex"><svg width="11" height="12"><use href="#s-pop"/></svg><svg width="11" height="11"><use href="#s-close"/></svg></span></header>
<div class="d-flex">
<div class="br-w"><div class="br-g">
<div class="br-cell d-flex flex-column align-items-center justify-content-between"><div class="br-d" style="width:1px;height:1px;background:#999"></div>1</div>
<div class="br-cell d-flex flex-column align-items-center justify-content-between"><div class="br-d" style="width:2px;height:2px;background:#aaa"></div>1.5</div>
<div class="br-cell d-flex flex-column align-items-center justify-content-between"><div class="br-d" style="width:2px;height:2px"></div>2</div>
<div class="br-cell d-flex flex-column align-items-center justify-content-between"><div class="br-d" style="width:3px;height:3px"></div>3</div>
<div class="br-cell d-flex flex-column align-items-center justify-content-between"><div class="br-d" style="width:4px;height:4px;margin-top:17px"></div>4</div>
<div class="br-cell d-flex flex-column align-items-center justify-content-between"><div class="br-d" style="width:5px;height:5px;margin-top:17px"></div>5</div>
<div class="br-cell d-flex flex-column align-items-center justify-content-between"><div class="br-d" style="width:7px;height:7px;margin-top:16px"></div>7</div>
<div class="br-cell d-flex flex-column align-items-center justify-content-between"><div class="br-d" style="width:10px;height:10px;margin-top:14px"></div>10</div>
<div class="br-cell d-flex flex-column align-items-center"><div class="br-d" style="width:12px;height:12px;margin-top:13px"></div></div>
<div class="br-cell d-flex flex-column align-items-center"><div class="br-d" style="width:15px;height:15px;margin-top:11px"></div></div>
<div class="br-cell d-flex flex-column align-items-center"><div class="br-d" style="width:20px;height:20px;margin-top:9px"></div></div>
<div class="br-cell d-flex flex-column align-items-center"><div class="br-d" style="width:24px;height:24px;margin-top:7px"></div></div>
</div></div>
<div class="vbar vb-126 d-flex flex-column align-items-center"><div class="ar-u vb-top"></div><div class="vthumb vt-42"></div><div class="ar-d"></div></div>
</div>
</section>
</div>
</div>

<svg class="red-ring" viewBox="0 0 40 46" preserveAspectRatio="none"><path d="M3 14C5 6 11 2 19 2c8 0 13 4 15 12 2 8 4 16 1 23-3 6-8 8-14 7-9-2-15-8-17-15-1-5-1-10-1-15" fill="none" stroke="#e8141c" stroke-width="4"/></svg>

<div class="status"></div>
</body>
</html>
